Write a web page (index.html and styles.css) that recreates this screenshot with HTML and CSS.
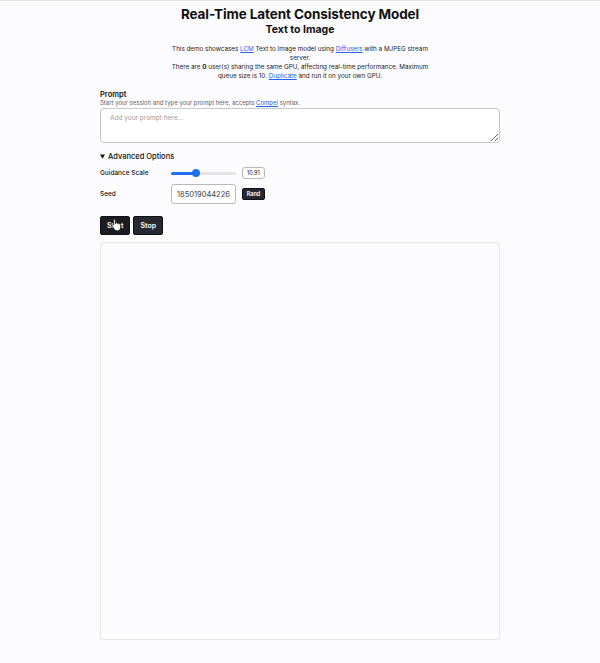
FILE: index.html
```html
<!DOCTYPE html>
<html lang="en">
<head>
    <meta charset="UTF-8">
    <meta name="viewport" content="width=device-width, initial-scale=1.0">
    <title>Real-Time Latent Consistency Model</title>
    <link rel="stylesheet" href="styles.css">
</head>
<body>

    <main class="app">
        <header class="intro">
            <h1>Real-Time Latent Consistency Model</h1>
            <h2>Text to Image</h2>
            <p class="lead">
                This demo showcases <a href="#">LCM</a> Text to Image model using <a href="#">Diffusers</a> with a MJPEG stream server.
            </p>
            <p class="lead">
                There are <b>0</b> user(s) sharing the same GPU, affecting real-time performance. Maximum queue size is 10. <a href="#">Duplicate</a> and run it on your own GPU.
            </p>
        </header>

        <!-- Prompt -->
        <section class="prompt">
            <label class="prompt-title" for="prompt">Prompt</label>
            <p class="hint">Start your session and type your prompt here, accepts <a href="#">Compel</a> syntax.</p>
            <textarea id="prompt" class="prompt-box" placeholder="Add your prompt here..."></textarea>
        </section>

        <!-- Advanced Options -->
        <details class="advanced" open>
            <summary>Advanced Options</summary>
            <div class="options">
                <label class="opt-label" for="guidance">Guidance Scale</label>
                <input id="guidance" class="slider" type="range" min="0" max="30" step="0.01" value="10.91" style="--fill: 36%">
                <span class="value-box">10.91</span>

                <label class="opt-label" for="seed">Seed</label>
                <input id="seed" class="seed-input" type="number" value="185019044226">
                <button class="btn btn-small" type="button">Rand</button>
            </div>
        </details>

        <div class="controls">
            <button class="btn btn-start" type="button">
                Start
                <svg class="cursor" viewBox="0 0 16 18" width="11" height="13">
                    <path d="M5 1.5c.8 0 1.3.6 1.3 1.3v5.3l.6-.1V7c0-.7.6-1.2 1.2-1.2s1.2.5 1.2 1.2v.6c.2-.6.7-.9 1.2-.9.7 0 1.2.5 1.2 1.2v.7c.2-.4.6-.6 1.1-.6.7 0 1.2.6 1.2 1.3v3.8c0 2.8-1.9 4.9-4.6 4.9H8.3c-1.4 0-2.5-.6-3.3-1.7L1.6 11.2c-.4-.6-.3-1.3.3-1.7.5-.4 1.2-.3 1.7.2l.2.2V2.8c0-.7.5-1.3 1.2-1.3z" fill="#fff" stroke="#111" stroke-width="1" stroke-linejoin="round"/>
                </svg>
            </button>
            <button class="btn" type="button">Stop</button>
        </div>

        <div class="canvas-box"></div>
    </main>

</body>
</html>
```

FILE: styles.css
```css
/* General Styling */
* {
    box-sizing: border-box;
}

body {
    margin: 0;
    background: #fcfbfd;
    border-top: 1px solid #e4e3e6;
    font-family: Inter, "Liberation Sans", sans-serif;
    color: #111;
}

a {
    color: #2563eb;
    text-decoration: underline;
}

.app {
    width: 400px;
    margin: 0 auto;
    padding-top: 5px;
}

/* Header */
.intro {
    text-align: center;
}

.intro h1 {
    font-size: 13.5px;
    font-weight: 700;
    margin: 0;
    line-height: 17px;
    letter-spacing: -0.1px;
}

.intro h2 {
    font-size: 10.5px;
    font-weight: 700;
    margin: 0 0 8px;
    line-height: 14px;
}

.lead {
    font-size: 6.3px;
    line-height: 9px;
    max-width: 272px;
    margin: 0 auto;
    color: #222;
}

/* Prompt */
.prompt {
    margin-top: 9px;
}

.prompt-title {
    display: block;
    font-size: 7.5px;
    font-weight: 600;
    line-height: 9px;
}

.hint {
    font-size: 6px;
    color: #666;
    margin: 0 0 1px;
    line-height: 8px;
}

.prompt-box {
    display: block;
    width: 100%;
    height: 35px;
    padding: 5px 9px;
    border: 1px solid #c8c8cc;
    border-radius: 4px;
    background: #fff;
    font-family: inherit;
    font-size: 6.5px;
    resize: vertical;
}

.prompt-box::placeholder {
    color: #9a9aa0;
}

/* Advanced Options */
.advanced {
    margin-top: 8px;
}

.advanced summary {
    font-size: 7.5px;
    font-weight: 500;
    line-height: 12px;
    cursor: pointer;
}

.options {
    display: grid;
    grid-template-columns: 65px 65px auto;
    align-items: center;
    column-gap: 6px;
    row-gap: 5px;
    margin-top: 4px;
}

.opt-label {
    font-size: 6.5px;
    font-weight: 500;
}

.slider {
    -webkit-appearance: none;
    appearance: none;
    width: 65px;
    height: 3px;
    margin: 0;
    border-radius: 2px;
    background: linear-gradient(to right, #1f6ff2 var(--fill), #e3e3e8 var(--fill));
}

.slider::-webkit-slider-thumb {
    -webkit-appearance: none;
    width: 8px;
    height: 8px;
    border-radius: 50%;
    background: #1f6ff2;
    border: none;
}

.value-box {
    justify-self: start;
    font-size: 5.5px;
    line-height: 8px;
    border: 1px solid #b9b9bd;
    border-radius: 3px;
    padding: 1px 4px;
    background: #fff;
}

.seed-input {
    width: 65px;
    height: 20px;
    border: 1px solid #b9b9bd;
    border-radius: 3px;
    padding: 0 5px;
    background: #fff;
    font-family: inherit;
    font-size: 7.5px;
    color: #444;
    -moz-appearance: textfield;
}

.seed-input::-webkit-inner-spin-button,
.seed-input::-webkit-outer-spin-button {
    -webkit-appearance: none;
    margin: 0;
}

/* Buttons */
.btn {
    position: relative;
    font-family: inherit;
    font-size: 7px;
    font-weight: 600;
    color: #fff;
    background: #262932;
    border: 1px solid #111;
    border-radius: 2px;
    height: 19px;
    padding: 0 6px;
}

.btn-small {
    justify-self: start;
    width: 23px;
    height: 12px;
    font-size: 5.5px;
    padding: 0;
}

.controls {
    display: flex;
    gap: 3px;
    margin-top: 12px;
}

.btn-start {
    background: #1c1d22;
}

.cursor {
    position: absolute;
    left: 10px;
    top: 1px;
}

/* Output */
.canvas-box {
    margin-top: 7px;
    height: 398px;
    border: 1px solid #e6e5e9;
    border-radius: 4px;
    background: #fcfbfd;
    box-shadow: 0 1px 2px rgba(0, 0, 0, 0.06);
}
```
